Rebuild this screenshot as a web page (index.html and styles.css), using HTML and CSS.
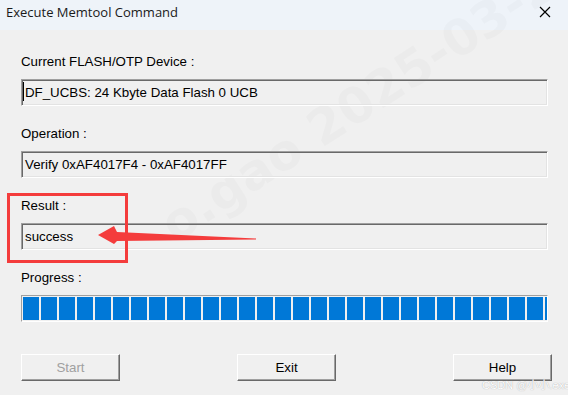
FILE: index.html
```html
<!DOCTYPE html>
<html>
  <head>
    <meta charset="utf-8" />
    <meta name="viewport" content="width=device-width, initial-scale=1" />
    <link rel="stylesheet" href="styles.css">
  </head>
  <body>
    <div class="window">
      <div class="titlebar">
        <span class="title">Execute Memtool Command</span>
        <svg class="close" width="12" height="12" viewBox="0 0 12 12">
          <path d="M1 1 L11 11 M11 1 L1 11" stroke="#000" stroke-width="1.2" fill="none" />
        </svg>
      </div>

      <div class="content">
        <div class="watermark">o.gao 2025-03-2</div>

        <div class="group">
          <div class="label">Current FLASH/OTP Device :</div>
          <div class="field"><span class="caret"></span>DF_UCBS: 24 Kbyte Data Flash 0 UCB</div>
        </div>

        <div class="group">
          <div class="label">Operation :</div>
          <div class="field">Verify 0xAF4017F4 - 0xAF4017FF</div>
        </div>

        <div class="group">
          <div class="label">Result :</div>
          <div class="field">success</div>
        </div>

        <div class="group">
          <div class="label">Progress :</div>
          <div class="progress"><div class="fill" style="width: 524px"></div></div>
        </div>

        <div class="buttons">
          <button class="btn" disabled>Start</button>
          <button class="btn">Exit</button>
          <button class="btn">Help</button>
        </div>
      </div>

      <!-- annotation -->
      <div class="mark"></div>
      <svg class="arrow" width="568" height="395" viewBox="0 0 568 395">
        <polygon points="98,235 114,226 117,232 256,238.4 256,239.6 117,241 114,244" fill="#f43c3c" />
      </svg>
      <div class="credit">CSDN @小小.exe</div>
    </div>
  </body>
</html>
```

FILE: styles.css
```css
html,
body {
  margin: 0;
  padding: 0;
  background: #f0f0f0;
}

.window {
  position: relative;
  width: 568px;
  height: 395px;
  overflow: hidden;
  font-family: "Liberation Sans", Arial, sans-serif;
  font-size: 13.3px;
  color: #000;
}

.titlebar {
  height: 30px;
  background: #eef3f9;
  display: flex;
  align-items: center;
  justify-content: space-between;
  padding: 0 17px 6px 6px;
  box-sizing: border-box;
}

.title {
  font-family: "Open Sans", "Noto Sans", sans-serif;
  font-weight: 400;
  font-size: 13px;
  color: #1a1a1a;
}

.content {
  position: relative;
  padding: 24px 0 0 21px;
}

.watermark {
  position: absolute;
  left: 150px;
  top: 175px;
  font-family: "DejaVu Sans", sans-serif;
  font-weight: bold;
  font-size: 50px;
  color: rgba(0, 0, 0, 0.02);
  white-space: nowrap;
  transform: rotate(-33deg);
  transform-origin: left top;
  pointer-events: none;
}

.group {
  margin-bottom: 20px;
}

.label {
  height: 16px;
  line-height: 16px;
  margin-bottom: 9px;
}

.field {
  position: relative;
  width: 527px;
  height: 27px;
  line-height: 25px;
  box-sizing: border-box;
  padding-left: 3px;
  border: 1px solid;
  border-color: #a0a0a0 #fff #fff #a0a0a0;
  box-shadow: inset 1px 1px 0 #696969, inset -1px -1px 0 #e3e3e3;
  white-space: nowrap;
}

.caret {
  position: absolute;
  left: 1px;
  top: 2px;
  width: 1px;
  height: 19px;
  background: #000;
}

.progress {
  width: 527px;
  height: 27px;
  box-sizing: border-box;
  padding: 1px;
  border: 1px solid;
  border-color: #a0a0a0 #fff #fff #a0a0a0;
}

.fill {
  height: 23px;
  background: repeating-linear-gradient(90deg, #0078d7 0, #0078d7 16px, transparent 16px, transparent 18px);
}

.buttons {
  display: flex;
  justify-content: space-between;
  width: 531px;
  margin-top: 32px;
}

.btn {
  width: 99px;
  height: 27px;
  padding: 0;
  font-family: "Liberation Sans", Arial, sans-serif;
  font-size: 13.3px;
  color: #000;
  background: #f0f0f0;
  border: 1px solid;
  border-color: #fff #696969 #696969 #fff;
  box-shadow: inset -1px -1px 0 #a0a0a0;
}

.btn:disabled {
  color: #a0a0a0;
}

.mark {
  position: absolute;
  left: 7px;
  top: 193px;
  width: 115px;
  height: 64px;
  border: 3px solid #f43c3c;
}

.arrow {
  position: absolute;
  left: 0;
  top: 0;
}

.credit {
  position: absolute;
  left: 482px;
  top: 378px;
  font-family: "Liberation Sans", "Noto Sans CJK SC", sans-serif;
  font-size: 11px;
  line-height: 14px;
  color: #fff;
  text-shadow: 0 0 1px #9a9a9a;
  white-space: nowrap;
}
```
